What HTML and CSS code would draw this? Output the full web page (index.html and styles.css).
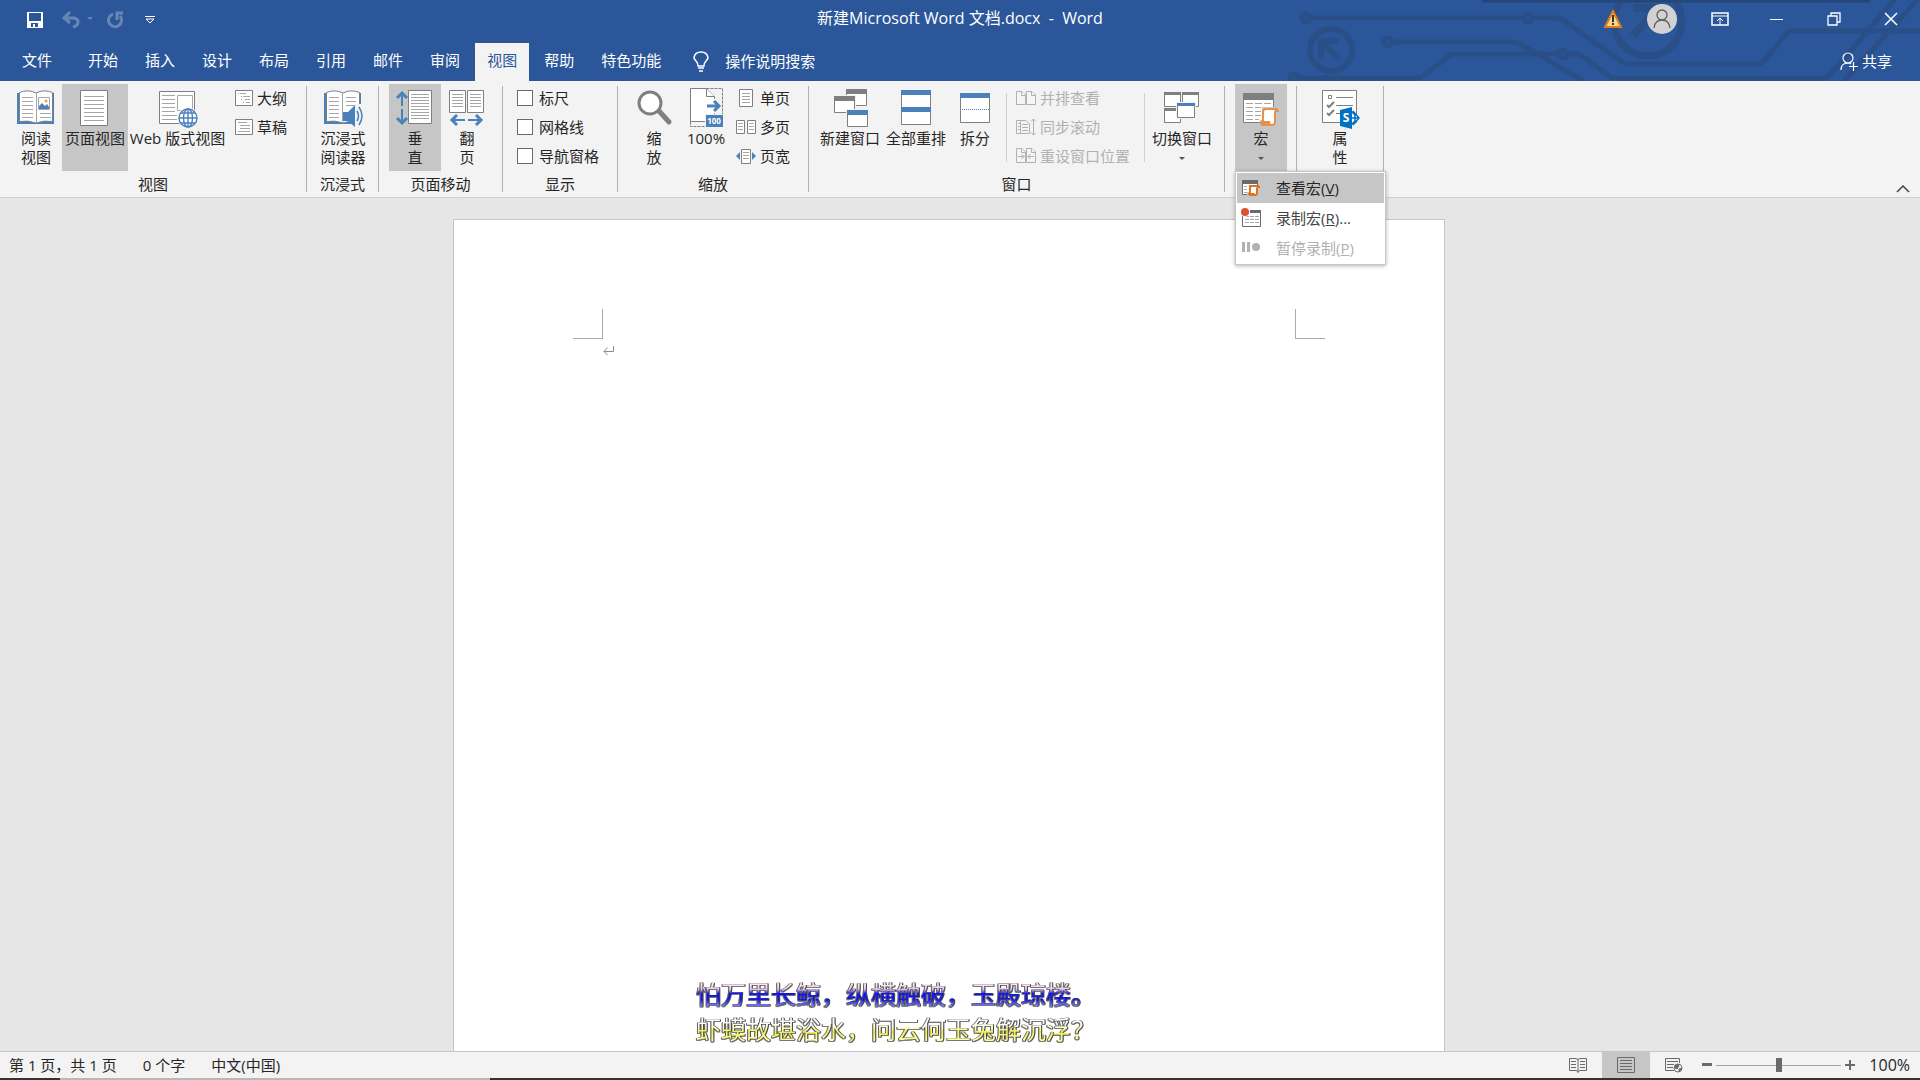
FILE: index.html
```
<!DOCTYPE html>
<html lang="zh-CN">
<head>
    <meta charset="UTF-8">
    <meta name="viewport" content="width=device-width, initial-scale=1.0">
    <title>新建Microsoft Word 文档.docx - Word</title>
    <link rel="stylesheet" href="styles.css">
</head>
<body>
    <header class="top">
        <svg class="circuit" width="640" height="81" viewBox="1280 0 640 81" fill="none" stroke="#2a4e86" stroke-width="5">
            <circle cx="1306" cy="18" r="4"/>
            <path d="M1311 18H1523M1533 18H1557Q1560 18 1563 20L1622 62Q1625 64 1628 64H1758Q1761 64 1763 62L1787 33Q1789 31 1792 31H1920"/>
            <circle cx="1528" cy="18" r="4"/>
            <circle cx="1388" cy="42" r="4"/>
            <path d="M1393 42H1512Q1516 42 1522 45L1583 81"/>
            <circle cx="1294" cy="78" r="4"/>
            <path d="M1299 78H1417Q1420 78 1423 76L1449 56Q1451 54 1455 54H1558M1568 54H1575Q1580 54 1585 58L1609 76Q1611 78 1614 78H1824Q1827 78 1829 76L1895 -1"/>
            <circle cx="1563" cy="54" r="4"/>
            <path d="M1844 81L1918 -1"/>
            <circle cx="1331" cy="50" r="21" stroke-width="6"/>
            <path d="M1321 59V41H1339M1322 42L1339 59" stroke-width="6"/>
            <circle cx="1648" cy="22" r="34" stroke-width="7"/>
            <path d="M1633 8H1658V32M1656 10L1633 36" stroke-width="8"/>
            <path d="M1482 1H1870" stroke="#254777" stroke-width="3"/>
        </svg>

        <div class="titlebar">
            <div class="quick">
                <button class="quick-save" aria-label="保存">
                    <svg width="16" height="16" viewBox="0 0 16 16" shape-rendering="crispEdges"><path fill="#fff" fill-rule="evenodd" d="M0 0H16V16H0ZM2 1V9H14V1ZM4 11V15H6V12H8V15H11V11Z"/></svg>
                </button>
                <button class="quick-undo" aria-label="撤消" disabled>
                    <svg width="32" height="18" viewBox="0 0 32 18"><path fill="none" stroke="#6885b5" stroke-width="3" d="M2 7H11Q16 7 16 11Q16 15 11 16M8 1L2 7L8 12"/><path fill="#6885b5" d="M25 6H31L28 9Z"/></svg>
                </button>
                <button class="quick-redo" aria-label="重复" disabled>
                    <svg width="18" height="18" viewBox="0 0 18 18"><path fill="none" stroke="#6885b5" stroke-width="3" d="M6 3A6.500 6.500 0 1 0 13 5M10 9V2H16"/></svg>
                </button>
                <button aria-label="自定义快速访问工具栏">
                    <svg width="10" height="8" viewBox="0 0 10 8"><path fill="none" stroke="#fff" d="M0 .5H10M1 3L5 7L9 3Z"/></svg>
                </button>
            </div>
            <h1 class="doc-title">新建Microsoft Word 文档.docx&nbsp; -&nbsp; Word</h1>
            <div class="window-tools">
                <svg width="20" height="20" viewBox="0 0 20 20"><path fill="#fcd68c" stroke="#e17a18" stroke-width="2" d="M10 2L18 18H2Z"/><path stroke="#333" stroke-width="2" d="M10 6V13M10 14V16"/></svg>
                <button class="avatar" aria-label="帐户">
                    <svg width="30" height="30" viewBox="0 0 30 30" fill="none" stroke="#5e5e5e" stroke-width="1.300"><circle cx="15" cy="11" r="5"/><path d="M7 24Q8 16 15 16Q22 16 23 24"/></svg>
                </button>
                <div class="window-buttons">
                    <button aria-label="功能区显示选项"><svg width="18" height="14" viewBox="0 0 18 14" fill="none" stroke="#fff"><path stroke-width="1.500" d="M1 1H17V13H1Z"/><path d="M1 4H17M9 13V6M6 9L9 6L12 9"/></svg></button>
                    <button aria-label="最小化"><svg width="14" height="14" viewBox="0 0 14 14"><path stroke="#fff" d="M0 7.500H13"/></svg></button>
                    <button aria-label="还原"><svg width="14" height="14" viewBox="0 0 14 14" fill="none" stroke="#fff" stroke-width="1.300"><path d="M1 4H10V13H1ZM4 4V1H13V10H10"/></svg></button>
                    <button aria-label="关闭"><svg width="14" height="14" viewBox="0 0 14 14"><path stroke="#fff" stroke-width="1.500" d="M1 1L13 13M13 1L1 13"/></svg></button>
                </div>
            </div>
        </div>

        <nav class="tabs">
            <button class="tab tab-file">文件</button>
            <button class="tab">开始</button>
            <button class="tab">插入</button>
            <button class="tab">设计</button>
            <button class="tab">布局</button>
            <button class="tab">引用</button>
            <button class="tab">邮件</button>
            <button class="tab">审阅</button>
            <button class="tab active">视图</button>
            <button class="tab">帮助</button>
            <button class="tab">特色功能</button>
            <button class="tell-me">
                <svg width="16" height="21" viewBox="0 0 16 21" fill="none" stroke="#fff" stroke-width="1.500"><path d="M5 15Q5 12 3 10Q1 8 1 6.500Q2 1 8 1Q14 1 15 6.500Q15 8 13 10Q11 12 11 15ZM5 17H11M6 20H10"/></svg>
                操作说明搜索
            </button>
            <button class="share">
                <svg width="18" height="19" viewBox="0 0 18 19" fill="none" stroke="#fff" stroke-width="1.200"><circle cx="8" cy="6" r="5"/><path d="M1 18Q1 11 8 11Q10 11 11 12M13.500 10V19M9 14.500H18"/></svg>
                共享
            </button>
        </nav>
    </header>

    <section class="ribbon">
        <div class="group">
            <div class="tools tools-views">
                <button class="big">
                    <svg width="40" height="42" viewBox="0 0 40 42"><path fill="#4a81bb" d="M1 6H38V37H1Z"/><path fill="#fff" stroke="#7f7f7f" d="M3.500 5.500Q12 2 20 6Q28 2 36.500 5.500V34.500Q28 33 20 36Q12 33 3.500 34.500Z"/><path stroke="#a6a6a6" d="M20.500 6V35M6 10.500H17M6 14.500H17M6 18.500H17M6 22.500H17M6 26.500H17M6 30.500H17M24 26.500H35M24 30.500H35"/><path fill="#fff" stroke="#a6a6a6" d="M22.500 10.500H33.500V22.500H22.500Z"/><path fill="#4a81bb" d="M23 22V19L26 16L29 19L31 17L33 20V22Z"/><circle cx="30" cy="14" r="1.500" fill="#e9a13b"/></svg>
                    <span>阅读<br>视图</span>
                </button>
                <button class="big wide selected">
                    <svg width="40" height="42" viewBox="0 0 40 42"><path fill="#fff" stroke="#7f7f7f" d="M5.500 3.500H32.500V38.500H5.500Z"/><path stroke="#a6a6a6" d="M9 9.500H29M9 13.500H29M9 17.500H29M9 21.500H29M9 25.500H29M9 29.500H29M9 33.500H29"/></svg>
                    <span>页面视图</span>
                </button>
                <button class="big widest">
                    <svg width="40" height="42" viewBox="0 0 40 42"><path fill="#fff" stroke="#7f7f7f" d="M1.500 4.500H36.500V36.500H1.500Z"/><path stroke="#a6a6a6" d="M4 8.500H17M4 12.500H17M4 16.500H17M4 20.500H17M4 24.500H17M4 28.500H19M4 32.500H19"/><path fill="#fff" stroke="#a6a6a6" d="M19.500 8.500H34.500V23.500H19.500Z"/><circle cx="30" cy="31" r="10.500" fill="#f3f3f3"/><g fill="#fff" stroke="#4a81bb" stroke-width="1.400"><circle cx="30" cy="31" r="9"/><ellipse cx="30" cy="31" rx="4.500" ry="9"/><path d="M30 22V40M21 31H39M23 26H37M23 36H37"/></g></svg>
                    <span>Web 版式视图</span>
                </button>
                <div class="small-list views-list">
                    <button class="small"><svg width="18" height="16" viewBox="0 0 18 16"><path fill="#fff" stroke="#7f7f7f" d="M.5 .5H17.500V15.500H.5Z"/><path stroke="#a6a6a6" d="M3 3.500H4M5 3.500H11M6 6.500H7M8 6.500H15M6 9.500H7M10 9.500H15M8 12.500H9M11 12.500H15"/></svg>大纲</button>
                    <button class="small"><svg width="18" height="16" viewBox="0 0 18 16"><path fill="#fff" stroke="#7f7f7f" d="M.5 .5H17.500V15.500H.5Z"/><path stroke="#a6a6a6" d="M3 3.500H12M5 6.500H15M5 9.500H15M3 12.500H15"/></svg>草稿</button>
                </div>
            </div>
            <div class="group-label">视图</div>
        </div>
        <div class="divider"></div>

        <div class="group">
            <div class="tools">
                <button class="big">
                    <svg width="40" height="42" viewBox="0 0 40 42"><path fill="#4a81bb" d="M1 6H38V37H1Z"/><path fill="#fff" stroke="#7f7f7f" d="M3.500 5.500Q12 2 20 6Q28 2 36.500 5.500V34.500Q28 33 20 36Q12 33 3.500 34.500Z"/><path stroke="#a6a6a6" d="M19.500 6V35M6 10.500H16M6 14.500H16M6 18.500H16M6 22.500H16M6 26.500H16M6 30.500H16M23 10.500H33M23 14.500H33M23 18.500H33"/><path fill="#f3f3f3" d="M32 17H40V41H34L28 36L31 20Z"/><path fill="#4a81bb" d="M20 25H25L32 18V40L25 34H20Z"/><path fill="none" stroke="#4a81bb" stroke-width="1.500" d="M34 24Q37 29 34 34M36 20Q42 29 36 38"/></svg>
                    <span>沉浸式<br>阅读器</span>
                </button>
            </div>
            <div class="group-label">沉浸式</div>
        </div>
        <div class="divider"></div>

        <div class="group">
            <div class="tools">
                <button class="big selected">
                    <svg width="40" height="42" viewBox="0 0 40 42"><path fill="none" stroke="#4a81bb" stroke-width="2" d="M7 6V19M7 22V36"/><path fill="none" stroke="#4a81bb" stroke-width="3" d="M2 11L7 6L12 11M2 31L7 36L12 31"/><path fill="#fff" stroke="#7f7f7f" d="M13.500 3.500H36.500V36.500H13.500Z"/><path stroke="#a6a6a6" d="M16 7.500H34M16 10.500H34M16 13.500H34M16 16.500H34M16 19.500H34M16 22.500H34M16 25.500H34M16 28.500H34M16 31.500H34"/></svg>
                    <span>垂<br>直</span>
                </button>
                <button class="big">
                    <svg width="40" height="42" viewBox="0 0 40 42"><path fill="#fff" stroke="#7f7f7f" d="M2.500 3.500H18.500V25.500H2.500ZM20.500 3.500H36.500V25.500H20.500Z"/><path stroke="#a6a6a6" d="M5 7.500H16M5 10.500H16M5 13.500H16M5 16.500H16M5 19.500H16M23 7.500H34M23 10.500H34M23 13.500H34M23 16.500H34M23 19.500H34"/><path fill="none" stroke="#4a81bb" stroke-width="2" d="M5 33H18M21 33H34"/><path fill="none" stroke="#4a81bb" stroke-width="3" d="M10 28L5 33L10 38M29 28L34 33L29 38"/></svg>
                    <span>翻<br>页</span>
                </button>
            </div>
            <div class="group-label">页面移动</div>
        </div>
        <div class="divider"></div>

        <div class="group">
            <div class="tools tools-show">
                <div class="small-list">
                    <label class="small check"><input type="checkbox">标尺</label>
                    <label class="small check"><input type="checkbox">网格线</label>
                    <label class="small check"><input type="checkbox">导航窗格</label>
                </div>
            </div>
            <div class="group-label">显示</div>
        </div>
        <div class="divider"></div>

        <div class="group">
            <div class="tools tools-zoom">
                <button class="big">
                    <svg width="40" height="42" viewBox="0 0 40 42"><path stroke="#7f7f7f" stroke-width="5" stroke-linecap="round" d="M25 24L35 35"/><circle cx="16" cy="16" r="11" fill="#fff" stroke="#7f7f7f" stroke-width="3"/></svg>
                    <span>缩<br>放</span>
                </button>
                <button class="big">
                    <svg width="40" height="42" viewBox="0 0 40 42"><path fill="none" stroke="#7f7f7f" stroke-dasharray="3 1" d="M4.500 1.500H36.500V39.500H4.500Z"/><path fill="#fff" stroke="#7f7f7f" d="M4.500 1.500H20.500L28.500 9.500V34.500H4.500Z"/><path fill="#fff" stroke="#7f7f7f" d="M20.500 1.500V9.500H28.500"/><path stroke="#fff" stroke-width="3" d="M28.500 12V26"/><path fill="none" stroke="#4a81bb" stroke-width="3" d="M21 19H33M28 14L33 19L28 24"/><path fill="#f3f3f3" d="M19 27H38V41H19Z"/><path fill="#4a81bb" d="M20 28H37V40H20Z"/><text x="28" y="37" class="icon-text">100</text></svg>
                    <span>100%</span>
                </button>
                <div class="small-list zoom-list">
                    <button class="small"><svg width="20" height="18" viewBox="0 0 20 18"><path fill="#fff" stroke="#7f7f7f" d="M3.500 .5H16.500V17.500H3.500Z"/><path stroke="#a6a6a6" d="M6 4.500H14M6 7.500H14M6 10.500H14M6 13.500H14"/></svg>单页</button>
                    <button class="small"><svg width="20" height="18" viewBox="0 0 20 18"><path fill="#fff" stroke="#7f7f7f" d="M.5 2.500H8.500V15.500H.5ZM11.500 2.500H19.500V15.500H11.500Z"/><path stroke="#a6a6a6" d="M2 5.500H7M2 8.500H7M2 11.500H7M13 5.500H18M13 8.500H18M13 11.500H18"/></svg>多页</button>
                    <button class="small"><svg width="20" height="18" viewBox="0 0 20 18"><path fill="#fff" stroke="#7f7f7f" d="M5.500 2.500H14.500V16.500H5.500Z"/><path stroke="#a6a6a6" d="M7 5.500H13M7 8.500H13M7 11.500H13"/><path fill="#4a81bb" d="M4 5V13L0 9ZM16 5V13L20 9Z"/></svg>页宽</button>
                </div>
            </div>
            <div class="group-label">缩放</div>
        </div>
        <div class="divider"></div>

        <div class="group">
            <div class="tools tools-window">
                <button class="big wide">
                    <svg width="40" height="42" viewBox="0 0 40 42"><path fill="#fff" stroke="#7f7f7f" d="M16.500 2.500H36.500V18.500H16.500Z"/><path fill="#7f7f7f" d="M16 2H37V7H16Z"/><path fill="#f3f3f3" d="M3 8H26V27H3Z"/><path fill="#fff" stroke="#7f7f7f" d="M4.500 9.500H24.500V25.500H4.500Z"/><path fill="#7f7f7f" d="M4 9H25V14H4Z"/><path fill="#f3f3f3" d="M16 22H38V40H16Z"/><path fill="#fff" stroke="#7f7f7f" d="M17.500 23.500H37.500V39.500H17.500Z"/><path fill="#4a81bb" d="M17 23H38V28H17Z"/></svg>
                    <span>新建窗口</span>
                </button>
                <button class="big wide">
                    <svg width="40" height="42" viewBox="0 0 40 42"><path fill="#fff" stroke="#7f7f7f" d="M5.500 3.500H34.500V37.500H5.500Z"/><path fill="#4a81bb" d="M5 3H35V8H5ZM5 20H35V25H5Z"/></svg>
                    <span>全部重排</span>
                </button>
                <button class="big">
                    <svg width="40" height="42" viewBox="0 0 40 42"><path fill="#fff" stroke="#7f7f7f" d="M5.500 6.500H34.500V35.500H5.500Z"/><path fill="#4a81bb" d="M5 6H35V11H5Z"/><path stroke="#4a81bb" stroke-dasharray="1 1" d="M7 22.500H34"/></svg>
                    <span>拆分</span>
                </button>
                <div class="inner-divider"></div>
                <div class="small-list window-list">
                    <button class="small" disabled><svg width="20" height="18" viewBox="0 0 20 18" fill="#f8f3f8" stroke="#b1b1b1"><path d="M.5 2.500H6L9.500 6V15.500H.5ZM10.500 2.500H16L19.500 6V15.500H10.500Z"/><path d="M5.500 2V6.500H9M15.500 2V6.500H19"/></svg>并排查看</button>
                    <button class="small" disabled><svg width="20" height="18" viewBox="0 0 20 18" fill="none" stroke="#b1b1b1"><path fill="#f8f3f8" d="M.5 2.500H10L13.500 6V15.500H.5Z"/><path d="M4.500 2V16M2 5.500H4M2 8.500H4M2 11.500H4M6 6.500H12M6 9.500H12M6 12.500H12M17.500 1V17M15 3.500L17.500 1L20 3.500M15 14.500L17.500 17L20 14.500"/></svg>同步滚动</button>
                    <button class="small" disabled><svg width="20" height="18" viewBox="0 0 20 18" fill="#f8f3f8" stroke="#b1b1b1"><path d="M.5 1.500H6L9.500 5V15.500H.5ZM10.500 1.500H16L19.500 5V15.500H10.500Z"/><path d="M5.500 1V5.500H9M15.500 1V5.500H19"/><path fill="none" d="M2 9.500H8M5.500 7L8 9.500L5.500 12M18 9.500H12M14.500 7L12 9.500L14.500 12"/></svg>重设窗口位置</button>
                </div>
                <div class="inner-divider"></div>
                <button class="big wide switch">
                    <svg width="40" height="42" viewBox="0 0 40 42"><path fill="#fff" stroke="#7f7f7f" d="M2.500 5.500H18.500V19.500H2.500ZM20.500 5.500H36.500V19.500H20.500ZM2.500 21.500H18.500V35.500H2.500Z"/><path fill="#7f7f7f" d="M2 5H19V8H2ZM20 5H37V8H20ZM2 21H19V24H2Z"/><path fill="#f3f3f3" d="M14 15H34V32H14Z"/><path fill="#fff" stroke="#7f7f7f" d="M15.500 16.500H32.500V30.500H15.500Z"/><path fill="#4a81bb" d="M15 16H33V19H15Z"/></svg>
                    <span>切换窗口</span>
                    <span class="arrow"></span>
                </button>
            </div>
            <div class="group-label">窗口</div>
        </div>
        <div class="divider"></div>

        <div class="group">
            <div class="tools">
                <button class="big selected">
                    <svg width="40" height="42" viewBox="0 0 40 42"><path fill="#fff" stroke="#7f7f7f" d="M2.500 6.500H32.500V35.500H2.500Z"/><path fill="#7f7f7f" d="M2 6H33V13H2Z"/><path stroke="#a6a6a6" stroke-dasharray="7 2" d="M5 16.500H30M5 20.500H20M5 24.500H20M5 28.500H20M5 32.500H18"/><path fill="#c6c6c6" d="M21 20H35V40H19V33H21Z"/><path fill="#fff" stroke="#e8914a" stroke-width="2" d="M22 35V25Q22 22 25 22H36Q34 23 34 26V34Q34 38 31 38H28L22 35"/><path fill="#e8914a" d="M19 34H29Q29 38 32 39H22Q19 39 19 34ZM34 21Q38 21 38 25H34Z"/></svg>
                    <span>宏</span>
                    <span class="arrow"></span>
                </button>
            </div>
            <div class="menu">
                <button class="menu-item hovered">
                    <svg width="20" height="20" viewBox="0 0 20 20"><path fill="#fff" stroke="#6a6a6a" d="M1.500 2.500H16.500V16.500H1.500Z"/><path fill="#6a6a6a" d="M1 2H17V6H1Z"/><path stroke="#a6a6a6" d="M3 8.500H6M3 11.500H6M3 14.500H6"/><path fill="#c6c6c6" d="M8 7H17V19H6V14H8Z"/><path fill="#fff" stroke="#e0721e" stroke-width="2" d="M9 16V8H18Q16 9 16 11V15Q16 17 14 17H12Z"/><path fill="#e0721e" d="M7 15H13L15 18H9Q7 18 7 15ZM16 7Q19 7 19 10H16Z"/></svg>
                    <span>查看宏(<u>V</u>)</span>
                </button>
                <button class="menu-item">
                    <svg width="20" height="20" viewBox="0 0 20 20"><path fill="#fff" stroke="#6a6a6a" d="M1.500 3.500H19.500V18.500H1.500Z"/><path fill="#6a6a6a" d="M9 2H20V5H9Z"/><path stroke="#a6a6a6" stroke-dasharray="4 1" d="M4 8.500H18M4 11.500H18M4 14.500H18"/><circle cx="4" cy="4" r="5" fill="#fff"/><circle cx="4" cy="4" r="4" fill="#d65532"/></svg>
                    <span>录制宏(<u>R</u>)...</span>
                </button>
                <button class="menu-item" disabled>
                    <svg width="20" height="20" viewBox="0 0 20 20"><path fill="#b1b1b1" d="M1 4H4V14H1ZM6 4H9V14H6Z"/><circle cx="15" cy="9" r="4" fill="#b1b1b1"/></svg>
                    <span>暂停录制(<u>P</u>)</span>
                </button>
            </div>
        </div>
        <div class="divider"></div>

        <div class="group">
            <div class="tools tools-props">
                <button class="big">
                    <svg width="40" height="42" viewBox="0 0 40 42"><path fill="#fff" stroke="#7f7f7f" d="M2.500 3.500H36.500V35.500H2.500Z"/><path fill="none" stroke="#7f7f7f" d="M8.500 8.500H11.500V11.500H8.500ZM16 10.500H33M16 18.500H33M16 26.500H20"/><path fill="none" stroke="#7f7f7f" stroke-width="2" d="M7 18L9 20L14 15M7 26L9 28L14 23"/><path fill="#fff" stroke="#0072c6" stroke-width="1.500" d="M31 24L35 28V34L31 38M33 24L39 31L33 38M31 31H39"/><path fill="#0072c6" d="M20 23L32 20V42L20 39Z"/><text x="26" y="35" class="icon-letter">S</text></svg>
                    <span>属<br>性</span>
                </button>
            </div>
        </div>
        <div class="divider"></div>

        <button class="collapse" aria-label="折叠功能区"><svg width="14" height="8" viewBox="0 0 14 8"><path fill="none" stroke="#444" stroke-width="1.500" d="M1 7L7 1L13 7"/></svg></button>
    </section>

    <main class="workspace">
        <article class="page">
            <div class="margins">
                <span class="corner corner-left"></span>
                <span class="corner corner-right"></span>
            </div>
            <svg class="return-mark" width="11" height="10" viewBox="0 0 11 10"><path fill="none" stroke="#8c8c8c" d="M10.500 0V5.500H1M4.500 1.500L1 5.500L4.500 9"/></svg>
        </article>
        <div class="lyrics">
            <p class="lyric lyric-now">怕万里长鲸，纵横触破，玉殿琼楼。</p>
            <p class="lyric lyric-next">虾蟆故堪浴水，问云何玉兔解沉浮？</p>
        </div>
    </main>

    <footer class="status">
        <span>第 1 页，共 1 页</span>
        <span>0 个字</span>
        <span>中文(中国)</span>
        <div class="status-right">
            <button class="view" aria-label="阅读视图"><svg width="18" height="16" viewBox="0 0 18 16" fill="none" stroke="#6a6a6a"><path d="M.5 1.500H7L9 2.500L11 1.500H17.500V13.500H11L9 14.500L7 13.500H.5ZM9 2V16M2 4.500H7M2 7.500H7M2 10.500H7M11 4.500H16M11 7.500H16M11 10.500H16"/></svg></button>
            <button class="view selected" aria-label="页面视图"><svg width="18" height="16" viewBox="0 0 18 16" fill="none" stroke="#6a6a6a"><path d="M.5 .5H17.500V15.500H.5ZM3 3.500H15M3 6.500H15M3 9.500H15M3 12.500H15"/></svg></button>
            <button class="view" aria-label="Web 版式视图"><svg width="18" height="16" viewBox="0 0 18 16" fill="none" stroke="#6a6a6a"><path d="M9 13.500H.5V1.500H14.500V6M2 4.500H13M2 7.500H9M2 10.500H8"/><circle cx="13" cy="11" r="4" fill="#fff"/><path fill="#6a6a6a" d="M10 9L13 7L14 9L12 12L10 11ZM14 12L17 11L14 15Z"/></svg></button>
            <button class="step" aria-label="缩小"><svg width="10" height="10" viewBox="0 0 10 10"><path fill="#6a6a6a" d="M0 3H10V6H0Z"/></svg></button>
            <input class="zoom" type="range" min="0" max="200" value="100" aria-label="缩放">
            <button class="step" aria-label="放大"><svg width="10" height="10" viewBox="0 0 10 10"><path fill="#6a6a6a" d="M0 4H4V0H6V4H10V6H6V10H4V6H0Z"/></svg></button>
            <button class="percent">100%</button>
        </div>
    </footer>
    <div class="taskbar-edge"></div>
</body>
</html>
```

FILE: styles.css
```
* {
    box-sizing: border-box;
}
body {
    margin: 0;
    height: 100vh;
    display: flex;
    flex-direction: column;
    overflow: hidden;
    background: #e6e6e6;
    color: #262626;
    font-family: "Open Sans", "Noto Sans CJK SC", sans-serif;
    font-size: 15px;
    line-height: 19px;
}
button {
    margin: 0;
    padding: 0;
    border: none;
    background: none;
    color: inherit;
    font: inherit;
    white-space: nowrap;
}
svg {
    display: block;
    flex: none;
}

/* title bar and tabs */
.top {
    position: relative;
    background: #2b579a;
    color: #fff;
}
.circuit {
    position: absolute;
    top: 0;
    right: 0;
}
.titlebar {
    position: relative;
    display: grid;
    grid-template-columns: 1fr auto 1fr;
    align-items: center;
    height: 37px;
}
.quick {
    display: flex;
    align-items: center;
    padding: 3px 0 0 27px;
}
.quick-save {
    margin-right: 19px;
}
.quick-undo {
    margin-right: 13px;
}
.quick-redo {
    margin-right: 20px;
}
.doc-title {
    margin: 0;
    font-size: 16px;
    font-weight: normal;
}
.window-tools {
    display: flex;
    align-items: center;
    justify-content: flex-end;
    padding-right: 1px;
}
.avatar {
    margin: 0 14px 0 24px;
    border-radius: 50%;
    background: #d2d2d2;
}
.window-buttons {
    display: flex;
}
.window-buttons button {
    display: flex;
    align-items: center;
    justify-content: center;
    width: 57px;
    height: 37px;
}
.tabs {
    position: relative;
    display: flex;
    gap: 3px;
    height: 44px;
    padding: 6px 28px 0 10px;
}
.tab {
    padding: 0 12px 4px;
}
.tab-file {
    margin-right: 9px;
}
.tab.active {
    background: #f3f3f3;
    color: #2b579a;
}
.tell-me,
.share {
    display: flex;
    align-items: center;
    padding-bottom: 2px;
}
.tell-me {
    gap: 16px;
    margin-left: 17px;
}
.share {
    gap: 4px;
    margin-left: auto;
}

/* ribbon */
.ribbon {
    position: relative;
    z-index: 1;
    display: flex;
    padding-top: 3px;
    background: #f3f3f3;
    border-bottom: 1px solid #d0d0d0;
}
.group {
    position: relative;
}
.tools {
    display: flex;
    height: 87px;
    padding: 0 9px 0 10px;
}
.tools-views {
    padding-right: 19px;
}
.tools-show {
    padding: 0 18px 0 14px;
}
.tools-zoom {
    padding-right: 18px;
}
.tools-window {
    padding-left: 8px;
}
.tools-props {
    padding: 0 17px;
}
.group-label {
    height: 26px;
    line-height: 27px;
    text-align: center;
}
.divider {
    width: 1px;
    margin: 2px 0 5px;
    background: #b1b1b1;
}
.inner-divider {
    width: 1px;
    margin: 9px 0 9px 5px;
    background: #d0d0d0;
}
.big {
    display: flex;
    flex-direction: column;
    align-items: center;
    justify-content: flex-start;
    width: 52px;
    height: 87px;
    padding-top: 3px;
    text-align: center;
}
.wide {
    width: 66px;
}
.widest {
    width: 99px;
}
.switch {
    margin-left: 4px;
}
.selected {
    background: #c6c6c6;
}
.arrow {
    width: 0;
    margin-top: 9px;
    border: 3px solid transparent;
    border-top-color: #555;
}
.small-list {
    display: flex;
    flex-direction: column;
}
.views-list {
    padding-left: 8px;
}
.zoom-list {
    padding-left: 4px;
}
.window-list {
    padding: 0 9px;
}
.small {
    display: flex;
    align-items: center;
    gap: 4px;
    height: 29px;
    padding-bottom: 1px;
}
.small:disabled {
    color: #b1b1b1;
}
.check {
    gap: 6px;
}
.check input {
    appearance: none;
    width: 16px;
    height: 16px;
    margin: 0;
    border: 1px solid #6a6a6a;
    background: #fff;
}
.icon-text,
.icon-letter {
    fill: #fff;
    font-size: 8px;
    font-weight: bold;
    text-anchor: middle;
}
.icon-letter {
    font-size: 12px;
}
.collapse {
    align-self: flex-end;
    margin: 0 10px 4px auto;
}

/* macro menu */
.menu {
    position: absolute;
    top: 87px;
    left: 10px;
    width: 151px;
    padding: 1px;
    border: 1px solid #c6c6c6;
    background: #fff;
    box-shadow: 0 1px 4px rgba(0, 0, 0, 0.3);
}
.menu-item {
    display: flex;
    align-items: center;
    gap: 15px;
    width: 100%;
    height: 30px;
    padding-left: 4px;
    color: #444;
}
.menu-item.hovered {
    background: #c6c6c6;
    color: #262626;
}
.menu-item:disabled {
    color: #b1b1b1;
}

/* document */
.workspace {
    position: relative;
    flex: 1;
    display: flex;
    justify-content: center;
    min-height: 0;
    padding: 21px 22px 0 0;
    overflow: hidden;
}
.page {
    width: 992px;
    padding: 89px 119px 0;
    border: 1px solid #c6c6c6;
    border-bottom: none;
    background: #fff;
}
.margins {
    display: flex;
    justify-content: space-between;
}
.corner {
    width: 30px;
    height: 30px;
    border: 0 solid #aaa;
    border-bottom-width: 1px;
}
.corner-left {
    border-right-width: 1px;
}
.corner-right {
    border-left-width: 1px;
}
.return-mark {
    margin: 7px 0 0 30px;
}
.lyrics {
    position: absolute;
    left: 696px;
    bottom: 5px;
}
.lyric {
    margin: 0;
    color: transparent;
    font-family: "Noto Sans CJK SC", sans-serif;
    font-size: 25px;
    line-height: 35px;
    background-clip: text;
    -webkit-background-clip: text;
    filter: drop-shadow(1px 0 0 #444) drop-shadow(-1px 0 0 #666) drop-shadow(0 1px 0 #777);
}
.lyric-now {
    background-image: linear-gradient(#ffe6f0 25%, #e6c8e6 38%, #1414f0 50%, #1414f0 68%, #8080ff 85%);
}
.lyric-next {
    background-image: linear-gradient(#fff 30%, #ffffe0 45%, #f0f050 60%, #ffffa0 80%);
}

/* status bar */
.status {
    display: flex;
    align-items: center;
    gap: 26px;
    height: 27px;
    padding-left: 9px;
    border-top: 1px solid #c6c6c6;
    background: #f3f3f3;
}
.status-right {
    display: flex;
    align-items: center;
    align-self: stretch;
    margin-left: auto;
    padding-right: 10px;
}
.view {
    display: flex;
    align-items: center;
    justify-content: center;
    align-self: stretch;
    width: 48px;
}
.step {
    padding: 0 4px;
}
.zoom {
    appearance: none;
    width: 125px;
    height: 14px;
    margin: 0;
    background: linear-gradient(#a6a6a6, #a6a6a6) center / 100% 1px no-repeat;
}
.zoom::-webkit-slider-thumb {
    appearance: none;
    width: 6px;
    height: 14px;
    background: #6a6a6a;
}
.percent {
    margin-left: 10px;
    font-size: 16px;
}
.taskbar-edge {
    height: 2px;
    background: linear-gradient(90deg, #333 60px, #b8b8b8 60px, #b8b8b8 490px, #333 490px);
}
```
